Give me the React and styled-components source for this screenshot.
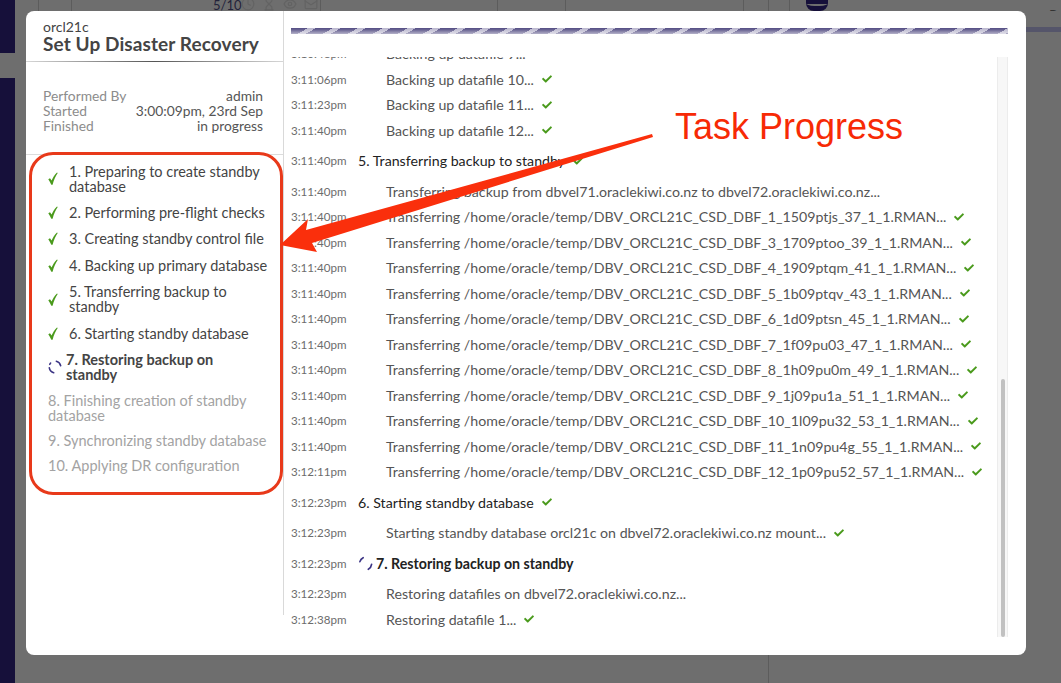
import React from 'react';
import styled, { createGlobalStyle } from 'styled-components';
import { FaCheck } from 'react-icons/fa';
import { Clock, Hourglass, Eye, Mail } from 'lucide-react';

const GlobalStyle = createGlobalStyle`
  html, body {
    margin: 0;
    padding: 0;
    height: 100%;
    overflow: hidden;
    background: #6e6e6e;
  }
  * {
    box-sizing: border-box;
  }
`;

const PageWrapper = styled.div`
  position: relative;
  display: flex;
  width: 1061px;
  height: 683px;
  overflow: hidden;
  background: #6e6e6e;
  font-family: 'Lato', 'Liberation Sans', sans-serif;
`;

const NavStrip = styled.div`
  display: flex;
  flex-direction: column;
  gap: 25px;
  width: 15px;
  height: 100%;
`;

const NavBlock = styled.div`
  height: ${({ $height }) => $height};
  flex: ${({ $height }) => ($height ? 'none' : 1)};
  background: #16103a;
`;

const BackdropTop = styled.div`
  position: absolute;
  top: 0;
  left: 0;
  width: 100%;
  height: 11px;
  overflow: hidden;
  color: #23233a;
  font-size: 13px;
`;

const BackdropScore = styled.span`
  position: absolute;
  top: -3px;
  left: 213px;
`;

const BackdropIcons = styled.div`
  position: absolute;
  top: -3px;
  left: 241px;
  display: flex;
  gap: 7px;
  color: #636363;
`;

const BackdropLine = styled.i`
  position: absolute;
  top: ${({ $top }) => $top || 0}px;
  left: ${({ $left }) => $left}px;
  width: 1px;
  height: ${({ $height }) => $height || 11}px;
  background: #5c5c5c;
`;

const BackdropDb = styled.i`
  position: absolute;
  top: 0;
  left: 806px;
  width: 22px;
  height: 11px;
  border-top: 4px solid #16103a;
  border-bottom: 5px solid #16103a;
  border-radius: 0 0 8px 8px;
`;

const BackdropTab = styled.span`
  position: absolute;
  top: 6px;
  left: 1049px;
  color: #333;
  font-size: 14px;
`;

const BackdropBand = styled.i`
  position: absolute;
  top: 27px;
  left: 1026px;
  width: 35px;
  height: 5px;
  background: #55556a;
`;

const Modal = styled.div`
  position: absolute;
  top: 11px;
  left: 26px;
  display: flex;
  width: 1000px;
  height: 644px;
  border-radius: 8px;
  background: #fff;
`;

const SidePanel = styled.aside`
  width: 258px;
  height: 604px;
  border-right: 1px solid #d9d9d9;
`;

const SideHeader = styled.header`
  height: 51px;
  padding: 8px 0 0 17px;
  border-bottom: 1px solid transparent;
  border-image: linear-gradient(90deg, #d8d8d8, #555 50%, #d8d8d8) 1;
`;

const Database = styled.div`
  color: #444;
  font-size: 14px;
  line-height: 15px;
`;

const Title = styled.h1`
  margin: 0;
  color: #444;
  font-size: 19px;
  font-weight: 700;
  letter-spacing: 0.1px;
  line-height: 19px;
`;

const MetaTable = styled.dl`
  display: grid;
  grid-template-columns: auto 1fr;
  align-content: start;
  height: 93px;
  margin: 0;
  padding: 26px 20px 0 17px;
  border-bottom: 1px solid #dcdcdc;
  font-size: 13.8px;
  line-height: 15px;
`;

const MetaLabel = styled.dt`
  color: #8c8c8c;
`;

const MetaValue = styled.dd`
  margin: 0;
  color: #555;
  text-align: right;
`;

const StepList = styled.ol`
  margin: 0;
  padding: 3px 14px 0 22px;
  list-style: none;
`;

const StepRow = styled.li`
  display: flex;
  align-items: center;
  gap: ${({ $state }) => ($state === 'active' ? '4px' : '11px')};
  padding: ${({ $state }) => ($state === 'pending' ? '5px 0' : '5.7px 0')};
  color: ${({ $state }) => ($state === 'pending' ? '#a3a3a3' : '#444')};
  font-size: 14.5px;
  font-weight: ${({ $state }) => ($state === 'active' ? 700 : 400)};
  line-height: 15px;
`;

const StepLabel = styled.span`
  max-width: ${({ $state }) => ($state === 'active' ? '175px' : 'none')};
`;

const StepCheck = styled.svg`
  flex: none;
  width: 10px;
  height: 13px;
  fill: #4a9a1c;
`;

const Spinner = styled.svg`
  flex: none;
  width: ${({ $size }) => $size}px;
  height: ${({ $size }) => $size}px;
  fill: none;
  stroke: #3c3585;
  stroke-width: 1.8;
  stroke-linecap: round;
`;

const LogSpinner = styled(Spinner)`
  margin-right: 3px;
`;

const MainPanel = styled.main`
  display: flex;
  flex: 1;
  flex-direction: column;
  padding: 17px 18px 0 7px;
`;

const ProgressBar = styled.div`
  flex: none;
  height: 6px;
  margin-bottom: 23px;
  background:
    linear-gradient(180deg, rgba(255, 255, 255, 0) 15%, rgba(255, 255, 255, 0.55)),
    repeating-linear-gradient(150deg, #5a5488 0 8.5px, #bdbad0 8.5px 12.5px);
`;

const ScrollArea = styled.div`
  display: flex;
  height: 580px;
`;

const LogList = styled.div`
  flex: 1;
  min-width: 0;
  overflow: hidden;
`;

const LogScroller = styled.div`
  margin-top: -15.8px;
`;

const LogRow = styled.div`
  display: flex;
  align-items: center;
  height: ${({ $step }) => ($step ? '35.5px' : '25.5px')};
  white-space: nowrap;
`;

const LogTime = styled.span`
  flex: none;
  width: ${({ $step }) => ($step ? '67px' : '95px')};
  color: #6c6c6c;
  font-size: 11.6px;
`;

const LogText = styled.span`
  color: ${({ $step }) => ($step ? '#222' : '#555')};
  font-size: 14.2px;
  font-weight: ${({ $active }) => ($active ? 700 : 400)};
`;

const LogCheck = styled(FaCheck)`
  flex: none;
  width: 10px;
  height: 10px;
  margin-left: 8px;
  color: #4a9a1c;
`;

const ScrollTrack = styled.div`
  flex: none;
  width: 11px;
  padding: 322px 2px 0 3px;
  border-left: 1px solid #ececec;
  border-right: 1px solid #ececec;
  background: #f7f7f7;
`;

const ScrollThumb = styled.div`
  height: 258px;
  border-radius: 3px;
  background: #c1c1c1;
`;

const Callout = styled.div`
  position: absolute;
  top: 152px;
  left: 29px;
  width: 254px;
  height: 343px;
  border: 3px solid #e8391a;
  border-radius: 24px;
`;

const CalloutLabel = styled.div`
  position: absolute;
  top: 106px;
  left: 675px;
  color: #f72a05;
  font-family: 'Liberation Sans', Arial, sans-serif;
  font-size: 36px;
  line-height: 41px;
  white-space: nowrap;
`;

const CalloutArrow = styled.svg`
  position: absolute;
  top: 0;
  left: 0;
  width: 1061px;
  height: 683px;
  pointer-events: none;
`;

const steps = [
  ['1. Preparing to create standby database', 'done'],
  ['2. Performing pre-flight checks', 'done'],
  ['3. Creating standby control file', 'done'],
  ['4. Backing up primary database', 'done'],
  ['5. Transferring backup to standby', 'done'],
  ['6. Starting standby database', 'done'],
  ['7. Restoring backup on standby', 'active'],
  ['8. Finishing creation of standby database', 'pending'],
  ['9. Synchronizing standby database', 'pending'],
  ['10. Applying DR configuration', 'pending'],
];

const transfer = '/home/oracle/temp/DBV_ORCL21C_CSD_DBF_';

const logs = [
  { time: '3:10:48pm', text: 'Backing up datafile 9...' },
  { time: '3:11:06pm', text: 'Backing up datafile 10...', done: true },
  { time: '3:11:23pm', text: 'Backing up datafile 11...', done: true },
  { time: '3:11:40pm', text: 'Backing up datafile 12...', done: true },
  { time: '3:11:40pm', text: '5. Transferring backup to standby', done: true, step: true },
  { time: '3:11:40pm', text: 'Transferring backup from dbvel71.oraclekiwi.co.nz to dbvel72.oraclekiwi.co.nz...' },
  { time: '3:11:40pm', text: `Transferring ${transfer}1_1509ptjs_37_1_1.RMAN...`, done: true },
  { time: '3:11:40pm', text: `Transferring ${transfer}3_1709ptoo_39_1_1.RMAN...`, done: true },
  { time: '3:11:40pm', text: `Transferring ${transfer}4_1909ptqm_41_1_1.RMAN...`, done: true },
  { time: '3:11:40pm', text: `Transferring ${transfer}5_1b09ptqv_43_1_1.RMAN...`, done: true },
  { time: '3:11:40pm', text: `Transferring ${transfer}6_1d09ptsn_45_1_1.RMAN...`, done: true },
  { time: '3:11:40pm', text: `Transferring ${transfer}7_1f09pu03_47_1_1.RMAN...`, done: true },
  { time: '3:11:40pm', text: `Transferring ${transfer}8_1h09pu0m_49_1_1.RMAN...`, done: true },
  { time: '3:11:40pm', text: `Transferring ${transfer}9_1j09pu1a_51_1_1.RMAN...`, done: true },
  { time: '3:11:40pm', text: `Transferring ${transfer}10_1l09pu32_53_1_1.RMAN...`, done: true },
  { time: '3:11:40pm', text: `Transferring ${transfer}11_1n09pu4g_55_1_1.RMAN...`, done: true },
  { time: '3:12:11pm', text: `Transferring ${transfer}12_1p09pu52_57_1_1.RMAN...`, done: true },
  { time: '3:12:23pm', text: '6. Starting standby database', done: true, step: true },
  { time: '3:12:23pm', text: 'Starting standby database orcl21c on dbvel72.oraclekiwi.co.nz mount...', done: true },
  { time: '3:12:23pm', text: '7. Restoring backup on standby', step: true, active: true },
  { time: '3:12:23pm', text: 'Restoring datafiles on dbvel72.oraclekiwi.co.nz...' },
  { time: '3:12:38pm', text: 'Restoring datafile 1...', done: true },
];

const backdropLines = [38, 71, 320, 497, 565, 743, 768, 789];

const App = () => (
  <PageWrapper>
    <GlobalStyle />
    <NavStrip>
      <NavBlock $height="53px" />
      <NavBlock />
    </NavStrip>
    <BackdropTop>
      {backdropLines.map((left) => (
        <BackdropLine key={left} $left={left} />
      ))}
      <BackdropScore>5/10</BackdropScore>
      <BackdropIcons>
        <Clock size={14} />
        <Hourglass size={14} />
        <Eye size={14} />
        <Mail size={14} />
      </BackdropIcons>
      <BackdropDb />
      <BackdropTab>Re</BackdropTab>
    </BackdropTop>
    <BackdropBand />
    <BackdropLine $left={768} $top={655} $height={28} />
    <Modal>
      <SidePanel>
        <SideHeader>
          <Database>orcl21c</Database>
          <Title>Set Up Disaster Recovery</Title>
        </SideHeader>
        <MetaTable>
          <MetaLabel>Performed By</MetaLabel>
          <MetaValue>admin</MetaValue>
          <MetaLabel>Started</MetaLabel>
          <MetaValue>3:00:09pm, 23rd Sep</MetaValue>
          <MetaLabel>Finished</MetaLabel>
          <MetaValue>in progress</MetaValue>
        </MetaTable>
        <StepList>
          {steps.map(([label, state]) => (
            <StepRow key={label} $state={state}>
              {state === 'done' && (
                <StepCheck viewBox="0 0 10 13">
                  <path d="M0.3 7.2 L2 6.3 L3.6 8.6 C4.8 5.6 6.6 2.8 9 0.4 L9.7 1 C7.6 4.2 5.8 8 4.6 12.7 L3.3 12.7 C2.5 10.8 1.5 9 0.3 7.2 Z" />
                </StepCheck>
              )}
              {state === 'active' && (
                <Spinner $size={14} viewBox="0 0 16 16">
                  <path d="M9.5 1.5A7 7 0 0 1 14.5 6.5" />
                  <path d="M1.5 9A7 7 0 0 0 6.5 14.5" />
                  <path d="M2 5A7 7 0 0 1 3 3.5" />
                </Spinner>
              )}
              <StepLabel $state={state}>{label}</StepLabel>
            </StepRow>
          ))}
        </StepList>
      </SidePanel>
      <MainPanel>
        <ProgressBar />
        <ScrollArea>
          <LogList>
            <LogScroller>
              {logs.map((log, index) => (
                <LogRow key={index} $step={log.step}>
                  <LogTime $step={log.step}>{log.time}</LogTime>
                  {log.active && (
                    <LogSpinner $size={15} viewBox="0 0 16 16">
                      <path d="M2 6A7 7 0 0 1 5.5 1.8" />
                      <path d="M14.5 9A7 7 0 0 1 11 14.2" />
                    </LogSpinner>
                  )}
                  <LogText $step={log.step} $active={log.active}>{log.text}</LogText>
                  {log.done && <LogCheck />}
                </LogRow>
              ))}
            </LogScroller>
          </LogList>
          <ScrollTrack>
            <ScrollThumb />
          </ScrollTrack>
        </ScrollArea>
      </MainPanel>
    </Modal>
    <Callout />
    <CalloutLabel>Task Progress</CalloutLabel>
    <CalloutArrow viewBox="0 0 1061 683">
      <polygon points="280,245 308,219 306,230 652,134 653,137 312,243 317,252" fill="#fa2f0c" />
    </CalloutArrow>
  </PageWrapper>
);

export default App;
